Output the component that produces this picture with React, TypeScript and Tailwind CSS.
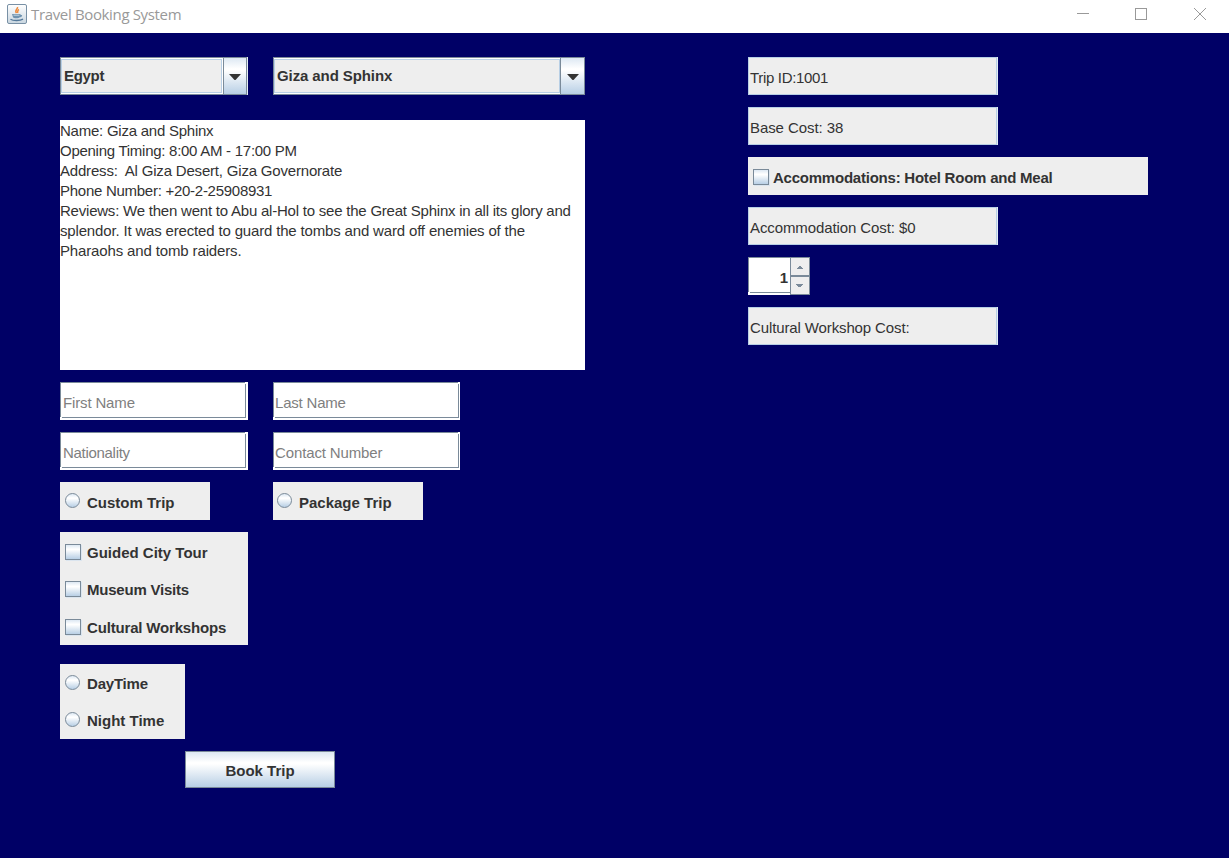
import React from "react";

type P = { className?: string; children?: React.ReactNode };

const STEEL =
  "bg-[linear-gradient(180deg,#dde8f3_0%,#ffffff_30%,#ffffff_34%,#b8cfe5_100%)]";

function Label({ className = "", children }: P) {
  return <span className={`block whitespace-pre text-[15px] leading-5 ${className}`}>{children}</span>;
}

function Combo({ className = "", inset = "", button = "", children }: P & { inset?: string; button?: string }) {
  return (
    <div className={`flex h-[38px] border border-[#7a8a99] bg-white ${className}`}>
      <div className={`flex flex-1 py-px ${inset}`}>
        <div className="flex-1 border border-[#b8cfe5] bg-[#eeeeee] pl-[2px] pt-[6px] font-bold">{children}</div>
      </div>
      <div className={`flex items-center border-l border-[#7a8a99] pt-px ${STEEL} ${button}`}>
        <svg width="12" height="6" viewBox="0 0 12 6">
          <path d="M0 0h12L6.500 6h-1z" fill="#333" />
        </svg>
      </div>
    </div>
  );
}

function Field({ className = "", children }: P) {
  return (
    <div className={`h-[38px] bg-white pb-[2px] ${className}`}>
      <div className="relative h-9 border border-[#7a8a99] pt-[10px] pl-[1px] text-[#808080]">
        <span className="absolute -right-px -top-px h-[2px] w-px bg-white" />
        <span className="absolute -bottom-px -left-px h-px w-[2px] bg-white" />
        {children}
      </div>
    </div>
  );
}

function Info({ children }: P) {
  return (
    <div className="h-[38px] w-[250px] bg-[#e4edf5] pr-px">
      <div className="h-full border border-[#b8cfe5] bg-[#eeeeee] pl-[1px] pt-[10px]">{children}</div>
    </div>
  );
}

function Radio({ className = "" }: P) {
  return <span className={`block size-[15px] shrink-0 rounded-full border border-[#7a8a99] ${STEEL} ${className}`} />;
}

function Check({ className = "" }: P) {
  return (
    <span className={`block size-4 shrink-0 border border-[#7a8a99] shadow-[1px_1px_0_#dbe5ef] ${STEEL} ${className}`} />
  );
}

function Spinner() {
  return (
    <div className="flex h-[38px] w-[62px] bg-white">
      <div className="relative h-9 w-[42px] border-y border-l border-[#7a8a99] pr-[2px] pt-[10px]">
        <span className="absolute -bottom-px -left-px h-px w-[2px] bg-white" />
        <Label className="text-right font-bold">1</Label>
      </div>
      <div className="flex h-full w-5 flex-col border border-[#7a8a99] bg-[#eeeeee]">
        <div className="h-[18px] border-b border-[#7a8a99] pl-[6px] pt-[8px]">
          <svg className="block" width="6" height="3" viewBox="0 0 6 3" shapeRendering="crispEdges">
            <path d="M2 0h2v1h1v1h1v1H0V2h1V1h1z" fill="#7a8a99" />
          </svg>
        </div>
        <div className="flex-1 border-t border-[#7a8a99] pl-[5px] pt-[7px]">
          <svg className="block" width="7" height="3" viewBox="0 0 7 3" shapeRendering="crispEdges">
            <path d="M0 0h7v1H6v1H5v1H2V2H1V1H0z" fill="#7a8a99" />
          </svg>
        </div>
      </div>
    </div>
  );
}

function JavaIcon() {
  return (
    <svg width="20" height="20" viewBox="0 0 20 20">
      <defs>
        <linearGradient id="tile" x1="0" y1="0" x2="0" y2="1">
          <stop offset="0" stopColor="#fff" />
          <stop offset="1" stopColor="#c9d6e0" />
        </linearGradient>
      </defs>
      <rect x=".5" y=".5" width="19" height="19" rx="1.5" fill="url(#tile)" stroke="#7890a5" />
      <path d="M10.500 3c.8 2-3.500 3-1 6M12 5.500c-2 1-1 2-1.500 3.500" fill="none" stroke="#ee8a3c" strokeWidth="1.500" />
      <path d="M5 10h8.500v1c2.500-.7 2 2-.8 2.200-.7 1.300-6 1.500-6.700 0z" fill="#6f93b0" />
      <path d="M6.500 11.200h6" stroke="#dce7ef" strokeWidth=".8" />
      <path d="M3.500 15.200c2.500 1.800 9.500 1.800 12.500 0" fill="none" stroke="#54799a" strokeWidth="1.400" />
    </svg>
  );
}

export default function App() {
  return (
    <div className="flex h-[858px] w-[1229px] flex-col overflow-hidden bg-[#000066] font-['Liberation_Sans',Arial,sans-serif] text-[#333333]">
      <header className="flex h-[33px] shrink-0 items-start bg-white">
        <div className="pl-[7px] pt-1">
          <JavaIcon />
        </div>
        <span className="ml-1 flex-1 whitespace-pre pt-1 font-['Open_Sans','Noto_Sans',sans-serif] text-[15px] leading-5 tracking-[-0.35px] text-[#999]">
          Travel Booking System
        </span>
        <svg width="152" height="33" viewBox="0 0 152 33" fill="none" stroke="#999" shapeRendering="crispEdges">
          <path d="M0 13.500h12M58.500 8.500h11v11h-11z" />
          <path d="M117 8l12 12M129 8l-12 12" shapeRendering="auto" />
        </svg>
      </header>
      <main className="flex pl-[60px] pt-6">
        <section className="flex w-[525px] flex-col">
          <div className="flex gap-[25px]">
            <div className="w-[188px] bg-[#e4edf5] pr-px">
              <Combo inset="pr-px" button="w-[23px] pl-[5px]"><Label className="tracking-[-0.3px]">Egypt</Label></Combo>
            </div>
            <Combo className="w-[312px]" button="w-6 pl-[6px]"><Label className="tracking-[-0.1px]">Giza and Sphinx</Label></Combo>
          </div>
          <div className="mt-[25px] h-[250px] bg-white pt-px">
            <Label className="tracking-[-0.24px]">Name: Giza and Sphinx</Label>
            <Label className="tracking-[-0.27px]">Opening Timing: 8:00 AM - 17:00 PM</Label>
            <Label className="tracking-[-0.19px]">{"Address:  Al Giza Desert, Giza Governorate"}</Label>
            <Label className="tracking-[-0.27px]">Phone Number: +20-2-25908931</Label>
            <Label className="tracking-[-0.22px]">Reviews: We then went to Abu al-Hol to see the Great Sphinx in all its glory and</Label>
            <Label className="tracking-[-0.165px]">splendor. It was erected to guard the tombs and ward off enemies of the</Label>
            <Label className="tracking-[-0.14px]">Pharaohs and tomb raiders.</Label>
          </div>
          <div className="mt-3 flex gap-[25px]">
            <Field className="w-[188px] pr-[2px]"><Label className="pl-px tracking-[-0.15px]">First Name</Label></Field>
            <Field className="w-[187px] pr-px"><Label className="tracking-[-0.2px]">Last Name</Label></Field>
          </div>
          <div className="mt-3 flex gap-[25px]">
            <Field className="w-[188px] pr-[2px]"><Label className="pl-px tracking-[-0.3px]">Nationality</Label></Field>
            <Field className="w-[187px] pr-px"><Label className="tracking-[-0.13px]">Contact Number</Label></Field>
          </div>
          <div className="mt-3 flex gap-[63px] font-bold">
            <div className="flex h-[38px] w-[150px] gap-[7px] bg-[#eeeeee] pl-[5px] pt-[11px]"><Radio /><Label>Custom Trip</Label></div>
            <div className="flex h-[38px] w-[150px] gap-[7px] bg-[#eeeeee] pl-1 pt-[11px]"><Radio /><Label>Package Trip</Label></div>
          </div>
          <div className="mt-3 h-[113px] w-[188px] bg-[#eeeeee] pl-[5px] pt-[11px] font-bold">
            <div className="flex h-[37px] gap-[6px]"><Check className="mt-px" /><Label>Guided City Tour</Label></div>
            <div className="flex h-[38px] gap-[6px]"><Check className="mt-px" /><Label className="tracking-[-0.22px]">Museum Visits</Label></div>
            <div className="flex gap-[6px]"><Check className="mt-px" /><Label className="tracking-[-0.17px]">Cultural Workshops</Label></div>
          </div>
          <div className="mt-[19px] h-[75px] w-[125px] bg-[#eeeeee] pl-[5px] pt-[10px] font-bold">
            <div className="flex h-[37px] gap-[7px]"><Radio className="mt-px" /><Label className="tracking-[-0.2px]">DayTime</Label></div>
            <div className="flex gap-[7px]"><Radio className="mt-px" /><Label>Night Time</Label></div>
          </div>
          <button className={`ml-[125px] mt-3 flex h-[37px] w-[150px] justify-center border border-[#7a8a99] pt-[9px] font-bold ${STEEL}`}>
            <Label>Book Trip</Label>
          </button>
        </section>
        <section className="ml-[163px] flex flex-col gap-3">
          <Info><Label className="tracking-[-0.33px]">Trip ID:1001</Label></Info>
          <Info><Label className="tracking-[-0.08px]">Base Cost: 38</Label></Info>
          <div className="flex h-[38px] w-[400px] gap-1 bg-[#eeeeee] pl-[5px] pt-[11px] font-bold">
            <Check className="mt-px" />
            <Label className="tracking-[-0.23px]">Accommodations: Hotel Room and Meal</Label>
          </div>
          <Info><Label className="tracking-[-0.1px]">Accommodation Cost: $0</Label></Info>
          <Spinner />
          <Info><Label className="tracking-[-0.12px]">Cultural Workshop Cost:</Label></Info>
        </section>
      </main>
    </div>
  );
}
